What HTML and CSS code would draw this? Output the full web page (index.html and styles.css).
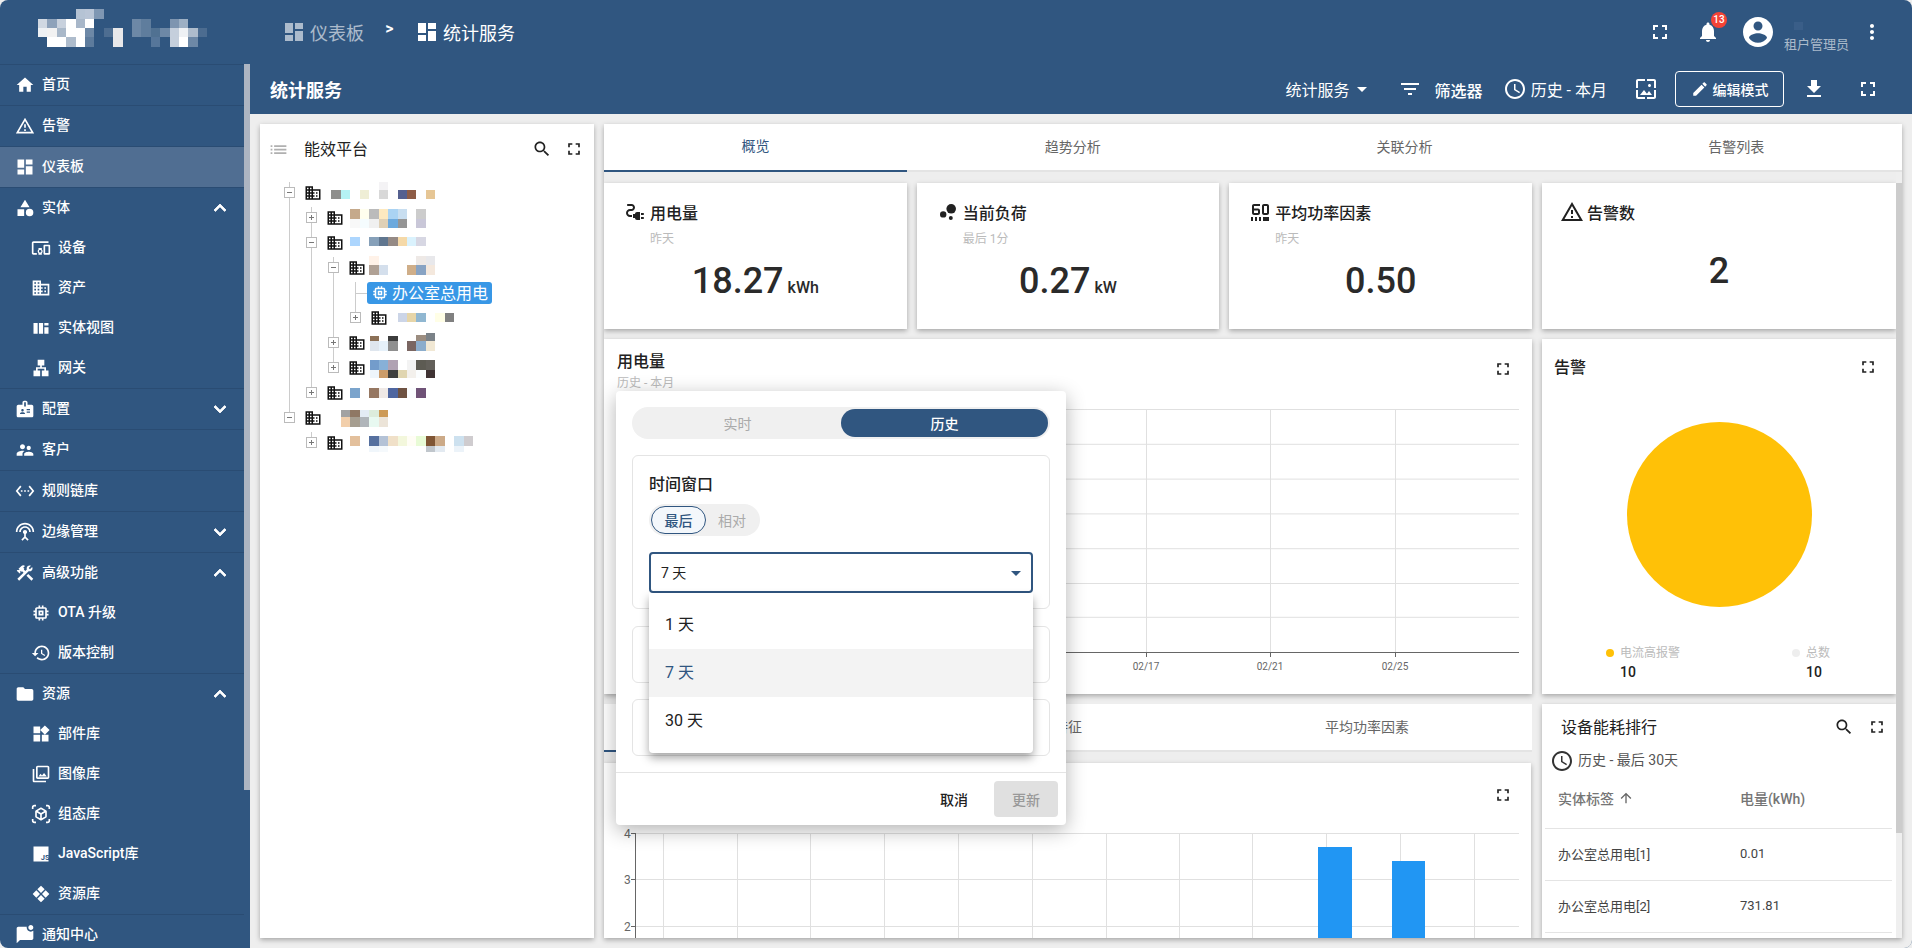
FILE: index.html
```html
<!DOCTYPE html>
<html lang="zh-CN">
<head>
<meta charset="utf-8">
<title>统计服务</title>
<link rel="stylesheet" href="styles.css">
</head>
<body>
<svg class="sprite" xmlns="http://www.w3.org/2000/svg">
<symbol id="i-home" viewBox="0 0 24 24"><path d="M10 20v-6h4v6h5v-8h3L12 3 2 12h3v8z"/></symbol>
<symbol id="i-warn" viewBox="0 0 24 24"><path d="M12 5.99L19.53 19H4.47L12 5.99M12 2L1 21h22L12 2zm1 14h-2v2h2v-2zm0-6h-2v4h2v-4z"/></symbol>
<symbol id="i-dash" viewBox="0 0 24 24"><path d="M3 13h8V3H3v10zm0 8h8v-6H3v6zm10 0h8V11h-8v10zm0-18v6h8V3h-8z"/></symbol>
<symbol id="i-cat" viewBox="0 0 24 24"><path d="M12 2l-5.5 9h11zM17.5 13a4.5 4.5 0 1 0 0 9 4.5 4.5 0 0 0 0-9zM3 13.5h8v8H3z"/></symbol>
<symbol id="i-dev" viewBox="0 0 24 24"><path d="M3 6h18V4H3c-1.1 0-2 .9-2 2v12c0 1.1.9 2 2 2h4v-2H3V6zm10 6H9v1.78c-.61.55-1 1.33-1 2.22s.39 1.67 1 2.22V20h4v-1.78c.61-.55 1-1.34 1-2.22s-.39-1.67-1-2.22V12zm-2 5.5c-.83 0-1.5-.67-1.5-1.5s.67-1.5 1.5-1.5 1.5.67 1.5 1.5-.67 1.5-1.5 1.5zM22 8h-6c-.5 0-1 .5-1 1v10c0 .5.5 1 1 1h6c.5 0 1-.5 1-1V9c0-.5-.5-1-1-1zm-1 10h-4v-8h4v8z"/></symbol>
<symbol id="i-domain" viewBox="0 0 24 24"><path d="M12 7V3H2v18h20V7H12zM6 19H4v-2h2v2zm0-4H4v-2h2v2zm0-4H4V9h2v2zm0-4H4V5h2v2zm4 12H8v-2h2v2zm0-4H8v-2h2v2zm0-4H8V9h2v2zm0-4H8V5h2v2zm10 12h-8v-2h2v-2h-2v-2h2v-2h-2V9h8v10zm-2-8h-2v2h2v-2zm0 4h-2v2h2v-2z"/></symbol>
<symbol id="i-quilt" viewBox="0 0 24 24"><path d="M3 6h5v13H3zM9.5 6h5v13h-5zM16 6h5v3h-5zM16 11h5v8h-5z"/></symbol>
<symbol id="i-lan" viewBox="0 0 24 24"><path d="M13 22h8v-7h-3v-4h-5V9h3V2H8v7h3v2H6v4H3v7h8v-7H8v-2h8v2h-3z"/></symbol>
<symbol id="i-badge" viewBox="0 0 24 24"><path d="M20 7h-5V4c0-1.1-.9-2-2-2h-2c-1.1 0-2 .9-2 2v3H4c-1.1 0-2 .9-2 2v11c0 1.1.9 2 2 2h16c1.1 0 2-.9 2-2V9c0-1.1-.9-2-2-2zM9 12c.83 0 1.5.67 1.5 1.5S9.83 15 9 15s-1.5-.67-1.5-1.5S8.17 12 9 12zm3 6H6v-.75c0-1 2-1.5 3-1.5s3 .5 3 1.5V18zm1-9h-2V4h2v5zm5 7.5h-4V15h4v1.5zm0-3h-4V12h4v1.5z"/></symbol>
<symbol id="i-sup" viewBox="0 0 24 24"><path d="M16.5 12c1.38 0 2.49-1.12 2.49-2.5S17.88 7 16.5 7C15.12 7 14 8.12 14 9.5s1.12 2.5 2.5 2.5zM9 11c1.66 0 2.99-1.34 2.99-3S10.66 5 9 5C7.34 5 6 6.34 6 8s1.34 3 3 3zm7.5 3c-1.83 0-5.5.92-5.5 2.75V19h11v-2.25c0-1.83-3.67-2.75-5.5-2.75zM9 13c-2.33 0-7 1.17-7 3.5V19h7v-2.25c0-.85.33-2.34 2.37-3.47C10.5 13.1 9.66 13 9 13z"/></symbol>
<symbol id="i-eth" viewBox="0 0 24 24"><path d="M7.77 6.76L6.23 5.48.82 12l5.41 6.52 1.54-1.28L3.42 12l4.35-5.24zM7 13h2v-2H7v2zm10-2h-2v2h2v-2zm-6 2h2v-2h-2v2zm6.77-7.52l-1.54 1.28L20.58 12l-4.35 5.24 1.54 1.28L23.18 12l-5.41-6.52z"/></symbol>
<symbol id="i-ant" viewBox="0 0 24 24"><path d="M12 5c-3.87 0-7 3.13-7 7h2c0-2.76 2.24-5 5-5s5 2.24 5 5h2c0-3.87-3.13-7-7-7zm1 9.29c.88-.39 1.5-1.26 1.5-2.29 0-1.38-1.12-2.5-2.5-2.5S9.5 10.62 9.5 12c0 1.02.62 1.9 1.5 2.29v3.3L7.59 21 9 22.41l3-3 3 3L16.41 21 13 17.59v-3.3zM12 1C5.93 1 1 5.93 1 12h2c0-4.97 4.03-9 9-9s9 4.03 9 9h2c0-6.07-4.93-11-11-11z"/></symbol>
<symbol id="i-tool" viewBox="0 0 24 24"><path d="M13.783 15.172l2.121-2.121 5.996 5.996-2.121 2.121zM17.5 10c1.93 0 3.5-1.57 3.5-3.5 0-.58-.16-1.12-.41-1.6l-2.7 2.7-1.49-1.49 2.7-2.7c-.48-.25-1.02-.41-1.6-.41C15.57 3 14 4.57 14 6.5c0 .41.08.8.21 1.16l-1.85 1.85-1.78-1.78.71-.71-1.41-1.41L12 3.49c-1.17-1.17-3.07-1.17-4.24 0L4.22 7.03l1.41 1.41H2.81l-.71.71 3.54 3.54.71-.71V9.15l1.41 1.41.71-.71 1.78 1.78-7.41 7.41 2.12 2.12L16.34 9.79c.36.13.75.21 1.16.21z"/></symbol>
<symbol id="i-chip" viewBox="0 0 24 24"><path d="M15 9H9v6h6V9zm-2 4h-2v-2h2v2zm8-2V9h-2V7c0-1.1-.9-2-2-2h-2V3h-2v2h-2V3H9v2H7c-1.1 0-2 .9-2 2v2H3v2h2v2H3v2h2v2c0 1.1.9 2 2 2h2v2h2v-2h2v2h2v-2h2c1.1 0 2-.9 2-2v-2h2v-2h-2v-2h2zm-4 6H7V7h10v10z"/></symbol>
<symbol id="i-hist" viewBox="0 0 24 24"><path d="M13 3c-4.97 0-9 4.03-9 9H1l3.89 3.89.07.14L9 12H6c0-3.87 3.13-7 7-7s7 3.13 7 7-3.13 7-7 7c-1.93 0-3.68-.79-4.94-2.06l-1.42 1.42C8.27 19.99 10.51 21 13 21c4.97 0 9-4.03 9-9s-4.03-9-9-9zm-1 5v5l4.28 2.54.72-1.21-3.5-2.08V8H12z"/></symbol>
<symbol id="i-folder" viewBox="0 0 24 24"><path d="M10 4H4c-1.1 0-1.99.9-1.99 2L2 18c0 1.1.9 2 2 2h16c1.1 0 2-.9 2-2V8c0-1.1-.9-2-2-2h-8l-2-2z"/></symbol>
<symbol id="i-widget" viewBox="0 0 24 24"><path d="M13 13v8h8v-8h-8zM3 21h8v-8H3v8zM3 3v8h8V3H3zm13.66-1.31L11 7.34 16.66 13l5.66-5.66-5.66-5.65z"/></symbol>
<symbol id="i-photo" viewBox="0 0 24 24"><path d="M20 4v12H8V4h12m0-2H8c-1.1 0-2 .9-2 2v12c0 1.1.9 2 2 2h12c1.1 0 2-.9 2-2V4c0-1.1-.9-2-2-2zm-8.5 9.67l1.69 2.26 2.48-3.1L19 15H9zM2 6v14c0 1.1.9 2 2 2h14v-2H4V6H2z"/></symbol>
<symbol id="i-ar" viewBox="0 0 24 24"><path d="M3 4c0-.55.45-1 1-1h2V1H4C2.34 1 1 2.34 1 4v2h2V4zm0 16v-2H1v2c0 1.66 1.34 3 3 3h2v-2H4c-.55 0-1-.45-1-1zM20 1h-2v2h2c.55 0 1 .45 1 1v2h2V4c0-1.66-1.34-3-3-3zm1 19c0 .55-.45 1-1 1h-2v2h2c1.66 0 3-1.34 3-3v-2h-2v2zm-2-5.13V9.13c0-.72-.38-1.38-1-1.73l-5-2.88c-.31-.18-.65-.27-1-.27s-.69.09-1 .27L6 7.39c-.62.36-1 1.02-1 1.74v5.74c0 .72.38 1.38 1 1.73l5 2.88c.31.18.65.27 1 .27s.69-.09 1-.27l5-2.88c.62-.35 1-1.01 1-1.73zm-8 2.3l-4-2.3v-4.63l4 2.33v4.6zm1-6.33L8.04 8.53 12 6.25l3.96 2.28L12 10.84zm5 4.03l-4 2.3v-4.6l4-2.33v4.63z"/></symbol>
<symbol id="i-diam" viewBox="0 0 24 24"><path d="M12 2l4.4 4.4L12 10.8 7.6 6.4zM6.4 7.6l4.4 4.4-4.4 4.4L2 12zM17.6 7.6L22 12l-4.4 4.4-4.4-4.4zM12 13.2l4.4 4.4L12 22l-4.4-4.4z"/></symbol>
<symbol id="i-note" viewBox="0 0 24 24"><path d="M22 6.98V16c0 1.1-.9 2-2 2H6l-4 4V4c0-1.1.9-2 2-2h10.1c-.06.32-.1.66-.1 1 0 2.76 2.24 5 5 5 1.13 0 2.16-.39 3-1.02zM16 3c0 1.66 1.34 3 3 3s3-1.34 3-3-1.34-3-3-3-3 1.34-3 3z"/></symbol>
<symbol id="i-up" viewBox="0 0 24 24"><path d="M12 8l-6 6 1.41 1.41L12 10.83l4.59 4.58L18 14z" stroke="currentColor" stroke-width=".8"/></symbol>
<symbol id="i-down" viewBox="0 0 24 24"><path d="M16.59 8.59L12 13.17 7.41 8.59 6 10l6 6 6-6z" stroke="currentColor" stroke-width=".8"/></symbol>
<symbol id="i-full" viewBox="0 0 24 24"><path d="M7 14H5v5h5v-2H7v-3zm-2-4h2V7h3V5H5v5zm12 7h-3v2h5v-5h-2v3zM14 5v2h3v3h2V5h-5z"/></symbol>
<symbol id="i-search" viewBox="0 0 24 24"><path d="M15.5 14h-.79l-.28-.27C15.41 12.59 16 11.11 16 9.5 16 5.91 13.09 3 9.5 3S3 5.91 3 9.5 5.91 16 9.5 16c1.61 0 3.09-.59 4.23-1.57l.27.28v.79l5 4.99L20.49 19l-4.99-5zm-6 0C7.01 14 5 11.99 5 9.5S7.01 5 9.5 5 14 7.01 14 9.5 11.99 14 9.5 14z"/></symbol>
<symbol id="i-bell" viewBox="0 0 24 24"><path d="M12 22c1.1 0 2-.9 2-2h-4c0 1.1.89 2 2 2zm6-6v-5c0-3.07-1.64-5.64-4.5-6.32V4c0-.83-.67-1.5-1.5-1.5s-1.5.67-1.5 1.5v.68C7.63 5.36 6 7.92 6 11v5l-2 2v1h16v-1l-2-2z"/></symbol>
<symbol id="i-acct" viewBox="0 0 24 24"><path d="M12 2C6.48 2 2 6.48 2 12s4.48 10 10 10 10-4.48 10-10S17.52 2 12 2zm0 3c1.66 0 3 1.34 3 3s-1.34 3-3 3-3-1.34-3-3 1.34-3 3-3zm0 14.2c-2.5 0-4.71-1.28-6-3.22.03-1.99 4-3.08 6-3.08 1.99 0 5.97 1.09 6 3.08-1.29 1.94-3.5 3.22-6 3.22z"/></symbol>
<symbol id="i-more" viewBox="0 0 24 24"><path d="M12 8c1.1 0 2-.9 2-2s-.9-2-2-2-2 .9-2 2 .9 2 2 2zm0 2c-1.1 0-2 .9-2 2s.9 2 2 2 2-.9 2-2-.9-2-2-2zm0 6c-1.1 0-2 .9-2 2s.9 2 2 2 2-.9 2-2-.9-2-2-2z"/></symbol>
<symbol id="i-filter" viewBox="0 0 24 24"><path d="M10 18h4v-2h-4v2zM3 6v2h18V6H3zm3 7h12v-2H6v2z"/></symbol>
<symbol id="i-clock" viewBox="0 0 24 24"><path d="M11.99 2C6.47 2 2 6.48 2 12s4.47 10 9.99 10C17.52 22 22 17.52 22 12S17.52 2 11.99 2zM12 20c-4.42 0-8-3.58-8-8s3.58-8 8-8 8 3.58 8 8-3.58 8-8 8zm.5-13H11v6l5.25 3.15.75-1.23-4.5-2.67z"/></symbol>
<symbol id="i-wall" viewBox="0 0 24 24"><path d="M4 4h7V2H4c-1.1 0-2 .9-2 2v7h2V4zm6 9l-4 5h12l-3-4-2.03 2.71L10 13zm7-4.5c0-.83-.67-1.5-1.5-1.5S14 7.67 14 8.5s.67 1.5 1.5 1.5S17 9.33 17 8.5zM20 2h-7v2h7v7h2V4c0-1.1-.9-2-2-2zm0 18h-7v2h7c1.1 0 2-.9 2-2v-7h-2v7zM4 13H2v7c0 1.1.9 2 2 2h7v-2H4v-7z"/></symbol>
<symbol id="i-edit" viewBox="0 0 24 24"><path d="M3 17.25V21h3.75L17.81 9.94l-3.75-3.75L3 17.25zM20.71 7.04c.39-.39.39-1.02 0-1.41l-2.34-2.34c-.39-.39-1.02-.39-1.41 0l-1.83 1.83 3.75 3.75 1.83-1.83z"/></symbol>
<symbol id="i-dl" viewBox="0 0 24 24"><path d="M19 9h-4V3H9v6H5l7 7 7-7zM5 18v2h14v-2H5z"/></symbol>
<symbol id="i-arrow" viewBox="0 0 24 24"><path d="M4 12l1.41 1.41L11 7.83V20h2V7.83l5.58 5.59L20 12l-8-8-8 8z"/></symbol>
<symbol id="i-caret" viewBox="0 0 24 24"><path d="M7 10l5 5 5-5z"/></symbol>
<symbol id="i-list" viewBox="0 0 24 24"><path d="M3 13h2v-2H3v2zm0 4h2v-2H3v2zm0-8h2V7H3v2zm4 4h14v-2H7v2zm0 4h14v-2H7v2zM7 7v2h14V7H7z"/></symbol>
<symbol id="i-plug" viewBox="0 0 24 24"><path d="M21 14c0-.55-.45-1-1-1h-2v2h2c.55 0 1-.45 1-1zM20 17h-2v2h2c.55 0 1-.45 1-1s-.45-1-1-1zM12 14h-2v4h2c0 1.1.9 2 2 2h3v-8h-3c-1.1 0-2 .9-2 2zM5 13c0-1.1.9-2 2-2h1.5c1.93 0 3.5-1.57 3.5-3.5S10.43 4 8.5 4H5c-.55 0-1 .45-1 1s.45 1 1 1h3.5C9.33 6 10 6.67 10 7.5S9.33 9 8.5 9H7c-2.21 0-4 1.79-4 4s1.79 4 4 4h2v-2H7c-1.1 0-2-.9-2-2z"/></symbol>
<symbol id="i-bubble" viewBox="0 0 24 24"><circle cx="7.2" cy="14.4" r="3.2"/><circle cx="14.8" cy="18" r="2"/><circle cx="15.2" cy="8.8" r="4.8"/></symbol>
<symbol id="i-fps" viewBox="0 0 24 24"><path d="M19 6v7h-3V6h3m0-2h-3c-1.1 0-2 .9-2 2v7c0 1.1.9 2 2 2h3c1.1 0 2-.9 2-2V6c0-1.1-.9-2-2-2zM12 6V4H6c-1.1 0-2 .9-2 2v7c0 1.1.9 2 2 2h4c1.1 0 2-.9 2-2v-2.5c0-1.1-.9-2-2-2H6V6h6zm-2 4.5V13H6v-2.5h4zM3 17h2v4H3zM7 17h2v4H7zM11 17h2v4h-2zM15 17h6v4h-6z"/></symbol>
</svg>

<div class="app">
  <header class="topbar">
    <svg class="logo" viewBox="0 0 20 4" shape-rendering="crispEdges">
      <rect x="4" y="0" width="1" height="1" fill="#b5c3d4"/><rect x="5" y="0" width="1" height="1" fill="#b9c5d6"/><rect x="6" y="0" width="1" height="1" fill="#7f97b3"/>
      <rect x="0" y="1" width="1" height="1" fill="#d0d8e2"/><rect x="1" y="1" width="1" height="1" fill="#8ea2ba"/><rect x="2" y="1" width="1" height="1" fill="#c8d1dd"/><rect x="3" y="1" width="1" height="1" fill="#fff"/><rect x="4" y="1" width="1" height="1" fill="#a8b7c9"/><rect x="5" y="1" width="1" height="1" fill="#fff"/><rect x="10" y="1" width="1" height="1" fill="#6d88a6"/><rect x="11" y="1" width="1" height="1" fill="#5f7d9d"/><rect x="14" y="1" width="1" height="1" fill="#7e95b0"/><rect x="15" y="1" width="1" height="1" fill="#9db0c4"/>
      <rect x="0" y="2" width="1" height="1" fill="#eef1f4"/><rect x="1" y="2" width="1" height="1" fill="#f2f2f2"/><rect x="2" y="2" width="1" height="1" fill="#a9b8c9"/><rect x="3" y="2" width="1" height="1" fill="#fff"/><rect x="4" y="2" width="1" height="1" fill="#fff"/><rect x="5" y="2" width="1" height="1" fill="#6d88a6"/><rect x="7" y="2" width="1" height="1" fill="#4d6d91"/><rect x="8" y="2" width="1" height="1" fill="#e8e8ea"/><rect x="10" y="2" width="1" height="1" fill="#6d88a6"/><rect x="11" y="2" width="1" height="1" fill="#5f7d9d"/><rect x="12" y="2" width="1" height="1" fill="#507192"/><rect x="13" y="2" width="1" height="1" fill="#6d88a6"/><rect x="14" y="2" width="1" height="1" fill="#c5cfdc"/><rect x="15" y="2" width="1" height="1" fill="#eef1f4"/><rect x="16" y="2" width="1" height="1" fill="#aebccc"/><rect x="17" y="2" width="1" height="1" fill="#4c6c90"/>
      <rect x="1" y="3" width="1" height="1" fill="#fff"/><rect x="2" y="3" width="1" height="1" fill="#fff"/><rect x="3" y="3" width="1" height="1" fill="#aebccc"/><rect x="4" y="3" width="1" height="1" fill="#fff"/><rect x="5" y="3" width="1" height="1" fill="#5d7b9c"/><rect x="8" y="3" width="1" height="1" fill="#e8e8ea"/><rect x="12" y="3" width="1" height="1" fill="#56769a"/><rect x="14" y="3" width="1" height="1" fill="#c5cfdc"/><rect x="15" y="3" width="1" height="1" fill="#fff"/><rect x="16" y="3" width="1" height="1" fill="#6d88a6"/>
    </svg>
    <nav class="crumbs">
      <a class="crumb crumb-dim"><svg class="ic"><use href="#i-dash"/></svg><span>仪表板</span></a>
      <span class="crumb-sep">&gt;</span>
      <a class="crumb"><svg class="ic"><use href="#i-dash"/></svg><span>统计服务</span></a>
    </nav>
    <div class="top-actions">
      <svg class="ic"><use href="#i-full"/></svg>
      <div class="bell"><svg class="ic"><use href="#i-bell"/></svg><span class="badge">13</span></div>
      <svg class="ic avatar"><use href="#i-acct"/></svg>
      <div class="user"><span class="user-name"></span><span class="user-role">租户管理员</span></div>
      <svg class="ic more"><use href="#i-more"/></svg>
    </div>
  </header>

  <div class="layout">
    <aside class="sidebar">
      <ul class="menu">
        <li class="item"><svg class="ic-s"><use href="#i-home"/></svg><span>首页</span></li>
        <li class="item"><svg class="ic-s"><use href="#i-warn"/></svg><span>告警</span></li>
        <li class="item item-active"><svg class="ic-s"><use href="#i-dash"/></svg><span>仪表板</span></li>
        <li class="item"><svg class="ic-s"><use href="#i-cat"/></svg><span>实体</span><svg class="ic chev"><use href="#i-up"/></svg></li>
        <li class="sub"><svg class="ic-s"><use href="#i-dev"/></svg><span>设备</span></li>
        <li class="sub"><svg class="ic-s"><use href="#i-domain"/></svg><span>资产</span></li>
        <li class="sub"><svg class="ic-s"><use href="#i-quilt"/></svg><span>实体视图</span></li>
        <li class="sub"><svg class="ic-s"><use href="#i-lan"/></svg><span>网关</span></li>
        <li class="item"><svg class="ic-s"><use href="#i-badge"/></svg><span>配置</span><svg class="ic chev"><use href="#i-down"/></svg></li>
        <li class="item"><svg class="ic-s"><use href="#i-sup"/></svg><span>客户</span></li>
        <li class="item"><svg class="ic-s"><use href="#i-eth"/></svg><span>规则链库</span></li>
        <li class="item"><svg class="ic-s"><use href="#i-ant"/></svg><span>边缘管理</span><svg class="ic chev"><use href="#i-down"/></svg></li>
        <li class="item"><svg class="ic-s"><use href="#i-tool"/></svg><span>高级功能</span><svg class="ic chev"><use href="#i-up"/></svg></li>
        <li class="sub"><svg class="ic-s"><use href="#i-chip"/></svg><span>OTA 升级</span></li>
        <li class="sub"><svg class="ic-s"><use href="#i-hist"/></svg><span>版本控制</span></li>
        <li class="item"><svg class="ic-s"><use href="#i-folder"/></svg><span>资源</span><svg class="ic chev"><use href="#i-up"/></svg></li>
        <li class="sub"><svg class="ic-s"><use href="#i-widget"/></svg><span>部件库</span></li>
        <li class="sub"><svg class="ic-s"><use href="#i-photo"/></svg><span>图像库</span></li>
        <li class="sub"><svg class="ic-s"><use href="#i-ar"/></svg><span>组态库</span></li>
        <li class="sub"><svg class="ic-s" viewBox="0 0 24 24"><path d="M3 3h18v18H3z"/><text class="js-text" x="17" y="19" text-anchor="middle">JS</text></svg><span>JavaScript库</span></li>
        <li class="sub"><svg class="ic-s"><use href="#i-diam"/></svg><span>资源库</span></li>
        <li class="item"><svg class="ic-s"><use href="#i-note"/></svg><span>通知中心</span></li>
      </ul>
      <div class="side-scroll"></div>
    </aside>

    <main class="main">
      <div class="toolbar">
        <h1 class="page-title">统计服务</h1>
        <div class="tb-actions">
          <div class="tb-state"><span>统计服务</span><svg class="ic"><use href="#i-caret"/></svg></div>
          <svg class="ic tb-filter"><use href="#i-filter"/></svg>
          <span class="tb-filter-text">筛选器</span>
          <svg class="ic tb-clock"><use href="#i-clock"/></svg>
          <span class="tb-time">历史 - 本月</span>
          <svg class="ic tb-img"><use href="#i-wall"/></svg>
          <button class="edit-btn"><svg class="ic-e"><use href="#i-edit"/></svg>编辑模式</button>
          <svg class="ic tb-dl"><use href="#i-dl"/></svg>
          <svg class="ic tb-full"><use href="#i-full"/></svg>
        </div>
      </div>

      <div class="board">
        <section class="tree-card">
          <div class="tree-head">
            <svg class="tree-list"><use href="#i-list"/></svg>
            <span class="tree-title">能效平台</span>
            <svg class="ic-m tree-search"><use href="#i-search"/></svg>
            <svg class="ic-m tree-full"><use href="#i-full"/></svg>
          </div>
          <div class="tree">
            <i class="guide g-a"></i><i class="guide g-b"></i><i class="guide g-c"></i><i class="guide g-d"></i><i class="guide g-e"></i><i class="guide-h"></i>
            <div class="node"><span class="box minus"></span><svg class="bld"><use href="#i-domain"/></svg>
              <svg class="mosaic" viewBox="195 180 480 75" shape-rendering="crispEdges"><rect x="357" y="186" width="27" height="24" fill="#f4f3f5"/><rect x="213" y="210" width="30" height="28" fill="#8f8f8d"/><rect x="243" y="210" width="27" height="28" fill="#b5f2f4"/><rect x="300" y="210" width="27" height="28" fill="#efeed6"/><rect x="357" y="210" width="27" height="28" fill="#d8d8d8"/><rect x="414" y="210" width="27" height="28" fill="#55608f"/><rect x="441" y="210" width="27" height="28" fill="#8e5c46"/><rect x="498" y="210" width="27" height="28" fill="#e6c695"/></svg></div>
            <div class="node lvl1"><span class="box plus"></span><svg class="bld"><use href="#i-domain"/></svg>
              <svg class="mosaic" viewBox="261 255 480 75" shape-rendering="crispEdges"><rect x="270" y="268" width="30" height="28" fill="#c5a98b"/><rect x="300" y="268" width="27" height="28" fill="#fffeee"/><rect x="327" y="268" width="30" height="28" fill="#bbb"/><rect x="357" y="268" width="27" height="28" fill="#fde9c0"/><rect x="384" y="268" width="30" height="28" fill="#aad3f3"/><rect x="414" y="268" width="27" height="28" fill="#c8def0"/><rect x="468" y="268" width="30" height="28" fill="#ccc"/><rect x="270" y="296" width="30" height="27" fill="#f8f8f8"/><rect x="300" y="296" width="27" height="27" fill="#f5fcfe"/><rect x="327" y="296" width="30" height="27" fill="#f0f0f0"/><rect x="357" y="296" width="27" height="27" fill="#dfd0b6"/><rect x="384" y="296" width="30" height="27" fill="#6ca9dd"/><rect x="414" y="296" width="27" height="27" fill="#959595"/><rect x="468" y="296" width="30" height="27" fill="#c9c7d8"/></svg></div>
            <div class="node lvl1"><span class="box minus"></span><svg class="bld"><use href="#i-domain"/></svg>
              <svg class="mosaic" viewBox="261 330 480 75" shape-rendering="crispEdges"><rect x="270" y="352" width="30" height="27" fill="#add6fe"/><rect x="327" y="352" width="30" height="27" fill="#86a0b9"/><rect x="357" y="352" width="27" height="27" fill="#60768f"/><rect x="384" y="352" width="30" height="27" fill="#958a85"/><rect x="414" y="352" width="27" height="27" fill="#f5d9a8"/><rect x="441" y="352" width="27" height="27" fill="#daf2fd"/><rect x="468" y="352" width="30" height="27" fill="#d7d7e3"/></svg></div>
            <div class="node lvl2"><span class="box minus"></span><svg class="bld"><use href="#i-domain"/></svg>
              <svg class="mosaic" viewBox="327 405 480 75" shape-rendering="crispEdges"><rect x="327" y="408" width="30" height="27" fill="#fff2e8"/><rect x="468" y="408" width="30" height="27" fill="#eee9e6"/><rect x="498" y="408" width="27" height="27" fill="#e8e8eb"/><rect x="327" y="435" width="30" height="30" fill="#b0a195"/><rect x="357" y="435" width="27" height="30" fill="#d4dfec"/><rect x="441" y="435" width="27" height="30" fill="#cfae89"/><rect x="468" y="435" width="30" height="30" fill="#88a3c3"/><rect x="498" y="435" width="27" height="30" fill="#f4e8dd"/></svg></div>
            <div class="node lvl3"><div class="selected"><svg class="ic-t"><use href="#i-chip"/></svg><span>办公室总用电</span></div></div>
            <div class="node lvl3"><span class="box plus"></span><svg class="bld"><use href="#i-domain"/></svg>
              <svg class="mosaic" viewBox="393 555 480 75" shape-rendering="crispEdges"><rect x="414" y="578" width="27" height="27" fill="#ccd5e7"/><rect x="441" y="578" width="27" height="27" fill="#e6d5a8"/><rect x="468" y="578" width="30" height="27" fill="#90b7d1"/><rect x="525" y="578" width="30" height="27" fill="#fffee6"/><rect x="555" y="578" width="27" height="27" fill="#808080"/></svg></div>
            <div class="node lvl2"><span class="box plus"></span><svg class="bld"><use href="#i-domain"/></svg>
              <svg class="mosaic" viewBox="327 630 480 75" shape-rendering="crispEdges"><rect x="330" y="648" width="27" height="15" fill="#8c7157"/><rect x="384" y="648" width="30" height="15" fill="#3c3c3c"/><rect x="468" y="644" width="30" height="19" fill="#9c8d80"/><rect x="498" y="640" width="27" height="23" fill="#7b8288"/><rect x="330" y="663" width="27" height="30" fill="#dfe6ee"/><rect x="357" y="663" width="27" height="30" fill="#e6f1fa"/><rect x="384" y="663" width="30" height="30" fill="#8f8f8f"/><rect x="441" y="663" width="27" height="30" fill="#7a6662"/><rect x="468" y="663" width="30" height="30" fill="#8cadcc"/><rect x="498" y="663" width="27" height="30" fill="#f1e8d4"/></svg></div>
            <div class="node lvl2"><span class="box plus"></span><svg class="bld"><use href="#i-domain"/></svg>
              <svg class="mosaic" viewBox="327 705 480 75" shape-rendering="crispEdges"><rect x="330" y="720" width="27" height="30" fill="#739ccb"/><rect x="357" y="720" width="27" height="30" fill="#87b0d7"/><rect x="384" y="720" width="30" height="30" fill="#b0a2b3"/><rect x="441" y="720" width="27" height="30" fill="#f3f3f3"/><rect x="468" y="720" width="30" height="30" fill="#5d5b53"/><rect x="498" y="720" width="27" height="30" fill="#63605a"/><rect x="330" y="750" width="27" height="25" fill="#eef5fb"/><rect x="357" y="750" width="27" height="25" fill="#cb9c6a"/><rect x="384" y="750" width="30" height="25" fill="#3f3f3d"/><rect x="414" y="750" width="27" height="25" fill="#e0d5b0"/><rect x="441" y="750" width="27" height="25" fill="#f3f0ec"/><rect x="468" y="750" width="30" height="25" fill="#fbfdfe"/><rect x="498" y="750" width="27" height="25" fill="#3f3334"/></svg></div>
            <div class="node lvl1"><span class="box plus"></span><svg class="bld"><use href="#i-domain"/></svg>
              <svg class="mosaic" viewBox="261 780 480 75" shape-rendering="crispEdges"><rect x="270" y="805" width="30" height="28" fill="#7ba4cc"/><rect x="327" y="805" width="30" height="28" fill="#967762"/><rect x="357" y="805" width="27" height="28" fill="#efe9e6"/><rect x="384" y="805" width="30" height="28" fill="#4f66a0"/><rect x="414" y="805" width="27" height="28" fill="#6e5242"/><rect x="441" y="805" width="27" height="28" fill="#fafcfe"/><rect x="468" y="805" width="30" height="28" fill="#6f5277"/></svg></div>
            <div class="node"><span class="box minus"></span><svg class="bld"><use href="#i-domain"/></svg>
              <svg class="mosaic" viewBox="195 855 480 75" shape-rendering="crispEdges"><rect x="243" y="870" width="27" height="22" fill="#a2a2a2"/><rect x="270" y="870" width="30" height="22" fill="#8f7864"/><rect x="300" y="870" width="27" height="22" fill="#e3ebf4"/><rect x="327" y="870" width="30" height="22" fill="#dcecdc"/><rect x="357" y="870" width="27" height="22" fill="#cd9a56"/><rect x="243" y="892" width="27" height="28" fill="#f2cfab"/><rect x="270" y="892" width="30" height="28" fill="#a69e90"/><rect x="300" y="892" width="27" height="28" fill="#b0b5ba"/><rect x="327" y="892" width="30" height="28" fill="#e8f9f1"/><rect x="357" y="892" width="27" height="28" fill="#ece4d8"/></svg></div>
            <div class="node lvl1"><span class="box plus"></span><svg class="bld"><use href="#i-domain"/></svg>
              <svg class="mosaic" viewBox="261 930 480 75" shape-rendering="crispEdges"><rect x="270" y="948" width="30" height="29" fill="#e3c09c"/><rect x="327" y="948" width="30" height="29" fill="#56709f"/><rect x="357" y="948" width="27" height="29" fill="#b4c2d6"/><rect x="384" y="948" width="30" height="29" fill="#f0e0c8"/><rect x="414" y="948" width="27" height="29" fill="#f3f7dc"/><rect x="441" y="948" width="27" height="29" fill="#fffdf5"/><rect x="468" y="948" width="30" height="29" fill="#e8fbd6"/><rect x="498" y="948" width="27" height="29" fill="#7f5534"/><rect x="525" y="948" width="30" height="29" fill="#ccaa88"/><rect x="582" y="948" width="30" height="29" fill="#cde1ef"/><rect x="612" y="948" width="27" height="29" fill="#cfcccf"/><rect x="327" y="977" width="30" height="18" fill="#f0f6fb"/><rect x="357" y="977" width="27" height="18" fill="#f5f9fc"/><rect x="498" y="977" width="27" height="18" fill="#c0c6cc"/><rect x="525" y="977" width="30" height="18" fill="#e3eaf1"/><rect x="582" y="977" width="30" height="18" fill="#ecf3f9"/></svg></div>
          </div>
        </section>

        <section class="stats">
          <div class="tabs tabs-top">
            <div class="tab tab-active">概览</div>
            <div class="tab">趋势分析</div>
            <div class="tab">关联分析</div>
            <div class="tab">告警列表</div>
          </div>
          <div class="stats-body">
            <div class="grid">
              <div class="left-col">
                <div class="kpis">
                  <article class="kpi">
                    <div class="kpi-head"><svg class="ic-k"><use href="#i-plug"/></svg><span>用电量</span></div>
                    <div class="kpi-sub">昨天</div>
                    <div class="kpi-val">18.27<small>kWh</small></div>
                  </article>
                  <article class="kpi">
                    <div class="kpi-head"><svg class="ic-k"><use href="#i-bubble"/></svg><span>当前负荷</span></div>
                    <div class="kpi-sub">最后 1分</div>
                    <div class="kpi-val">0.27<small>kW</small></div>
                  </article>
                  <article class="kpi">
                    <div class="kpi-head"><svg class="ic-k"><use href="#i-fps"/></svg><span>平均功率因素</span></div>
                    <div class="kpi-sub">昨天</div>
                    <div class="kpi-val">0.50</div>
                  </article>
                </div>
                <article class="chart-card">
                  <div class="chart-head">
                    <div><div class="chart-title">用电量</div><div class="chart-sub">历史 - 本月</div></div>
                    <svg class="ic-m chart-full"><use href="#i-full"/></svg>
                  </div>
                  <svg class="plot" viewBox="0 0 928 285" width="928" height="285">
                    <path class="grid-line" d="M31 .5H915M31 35.3H915M31 70.1H915M31 104.9H915M31 139.7H915M31 174.5H915M31 208.3H915M417.5 0V243M542.5 0V243M666.5 0V243M791.5 0V243"/>
                    <path class="axis-line" d="M31 243.5H915M417.5 243V248M542.5 243V248M666.5 243V248M791.5 243V248"/>
                    <text class="tick" x="542" y="261" text-anchor="middle">02/17</text>
                    <text class="tick" x="666" y="261" text-anchor="middle">02/21</text>
                    <text class="tick" x="791" y="261" text-anchor="middle">02/25</text>
                  </svg>
                </article>
                <div class="sub-panel">
                  <div class="tabs tabs-low">
                    <div class="tab tab-active">功率分析</div>
                    <div class="tab">负荷特征</div>
                    <div class="tab">平均功率因素</div>
                  </div>
                  <article class="bar-card">
                    <div class="bar-head"><svg class="ic-m"><use href="#i-full"/></svg></div>
                    <svg class="plot" viewBox="0 0 928 105" width="928" height="105">
                      <path class="grid-line" d="M31 .5H915M31 46.5H915M31 93.5H915M59.5 0V105M133.5 0V105M206.5 0V105M280.5 0V105M354.5 0V105M428.5 0V105M502.5 0V105M575.5 0V105M648.5 0V105M722.5 0V105M796.5 0V105M870.5 0V105"/>
                      <path class="axis-line" d="M31.5 0V105M27 .5H31M27 46.5H31M27 93.5H31"/>
                      <text class="tick tick-y" x="20" y="5">4</text>
                      <text class="tick tick-y" x="20" y="51">3</text>
                      <text class="tick tick-y" x="20" y="98">2</text>
                      <rect class="bar" x="714" y="14" width="34" height="91"/>
                      <rect class="bar" x="788" y="28" width="33" height="77"/>
                    </svg>
                  </article>
                </div>
              </div>
              <div class="right-col">
                <article class="kpi kpi-alarm">
                  <div class="kpi-head"><svg class="ic-k ic-warn"><use href="#i-warn"/></svg><span>告警数</span></div>
                  <div class="alarm-val">2</div>
                </article>
                <article class="pie-card">
                  <div class="pie-head"><span>告警</span><svg class="ic-m"><use href="#i-full"/></svg></div>
                  <div class="pie"></div>
                  <div class="legend">
                    <div class="legend-item"><i class="dot dot-y"></i><span class="legend-label">电流高报警</span><b class="legend-val">10</b></div>
                    <div class="legend-item legend-total"><i class="dot dot-g"></i><span class="legend-label">总数</span><b class="legend-val">10</b></div>
                  </div>
                </article>
                <article class="rank-card">
                  <div class="rank-head"><span class="rank-title">设备能耗排行</span><svg class="ic-m"><use href="#i-search"/></svg><svg class="ic-m"><use href="#i-full"/></svg></div>
                  <div class="rank-time"><svg class="ic"><use href="#i-clock"/></svg><span>历史 - 最后 30天</span></div>
                  <div class="rank-row rank-th"><span class="th-sort">实体标签<svg class="ic-a"><use href="#i-arrow"/></svg></span><span>电量(kWh)</span></div>
                  <div class="rank-row"><span>办公室总用电[1]</span><span>0.01</span></div>
                  <div class="rank-row"><span>办公室总用电[2]</span><span>731.81</span></div>
                </article>
              </div>
            </div>
            <div class="inner-scroll"><div class="inner-thumb"></div></div>
          </div>
        </section>
      </div>
    </main>
  </div>

  <div class="popup">
    <div class="seg seg-wide"><span class="seg-off">实时</span><span class="seg-on">历史</span></div>
    <div class="panel panel-time">
      <div class="panel-title">时间窗口</div>
      <div class="seg-small"><span class="small-on">最后</span><span class="small-off">相对</span></div>
      <div class="select"><span>7 天</span><svg class="ic sel-caret"><use href="#i-caret"/></svg></div>
    </div>
    <div class="panel panel-low panel-low-first"></div>
    <div class="panel panel-low"></div>
    <div class="popup-foot"><button class="btn-cancel">取消</button><button class="btn-update">更新</button></div>
    <ul class="dropdown">
      <li><span>1 天</span></li>
      <li class="opt-on"><span>7 天</span></li>
      <li><span>30 天</span></li>
    </ul>
  </div>
</div>
</body>
</html>
```
FILE: styles.css
```css
* { box-sizing: border-box; }
html, body { margin: 0; padding: 0; }
body {
  width: 1912px; height: 948px; overflow: hidden; background: #eee;
  font-family: Roboto, "Noto Sans CJK SC", sans-serif; font-size: 14px; color: #212121;
}
ul { list-style: none; margin: 0; padding: 0; }
h1 { margin: 0; }
button { font-family: inherit; }
.sprite { display: none; }
.ic { width: 24px; height: 24px; flex: none; fill: currentColor; }
.ic-m { width: 20px; height: 20px; flex: none; fill: #212121; }
.ic-s { width: 20px; height: 20px; flex: none; fill: #fff; }
.ic-e { width: 18px; height: 18px; flex: none; fill: #fff; }
.ic-t { width: 18px; height: 18px; flex: none; fill: #fff; }
.ic-a { width: 16px; height: 16px; flex: none; fill: #666; margin-left: 4px; }
.ic-k { width: 24px; height: 24px; flex: none; fill: #212121; }

.app {
  position: relative; width: 1912px; height: 948px; background: #305680;
  border-radius: 8px; overflow: hidden; display: flex; flex-direction: column; color: #fff;
}

/* top bar */
.topbar { height: 64px; flex: none; display: flex; align-items: center; }
.logo { width: 188px; height: 38px; margin: 9px 0 0 38px; flex: none; align-self: flex-start; }
.crumbs { display: flex; align-items: center; margin-left: 56px; font-size: 18px; }
.crumb { display: flex; align-items: center; gap: 4px; }
.crumb-dim { opacity: .6; }
.crumb-sep { width: 51px; text-align: center; font-size: 16px; font-weight: 700; margin-top: -8px; }
.top-actions { margin-left: auto; padding-right: 28px; display: flex; align-items: center; }
.bell { position: relative; width: 24px; height: 24px; margin-left: 24px; }
.badge {
  position: absolute; left: 15px; top: -8px; min-width: 16px; height: 16px; border-radius: 8px;
  background: #f44336; color: #fff; font-size: 10px; font-weight: 500; line-height: 16px; text-align: center;
}
.avatar { width: 36px; height: 36px; margin-left: 20px; }
.user { width: 64px; margin-left: 8px; height: 36px; display: flex; flex-direction: column; justify-content: flex-end; margin-top: 8px; }
.user-role { font-size: 13px; color: rgba(255,255,255,.6); white-space: nowrap; line-height: 18px; }
.user-name { display: block; width: 9px; height: 8px; background: #3a5e88; margin: 0 0 6px 10px; }
.more { margin-left: 12px; }

/* layout */
.layout { flex: 1; display: flex; min-height: 0; }
.sidebar { width: 250px; flex: none; display: flex; overflow: hidden; }
.menu { width: 244px; flex: none; }
.item, .sub { display: flex; align-items: center; font-weight: 500; font-size: 14px; gap: 7px; }
.item span, .sub span { margin-bottom: 4px; }
.item { height: 41px; padding-left: 15px; border-top: 1px solid #2a4c73; }
.sub { height: 40px; padding-left: 31px; }
.item-active { background: #506e92; }
.chev { margin-left: auto; margin-right: 12px; }
.js-text { fill: #305680; font-size: 9px; font-weight: 700; font-family: Roboto, sans-serif; }
.side-scroll { width: 6px; height: 726px; background: #adb5c2; }

.main { flex: 1; min-width: 0; display: flex; flex-direction: column; }
.toolbar { height: 50px; flex: none; display: flex; align-items: center; padding: 0 32px 0 20px; }
.page-title { font-size: 18px; font-weight: 700; }
.tb-actions { margin-left: auto; display: flex; align-items: center; font-size: 16px; }
.tb-state { display: flex; align-items: center; }
.tb-filter { margin-left: 24px; }
.tb-filter-text { margin-left: 13px; font-weight: 500; margin-top: 2px; }
.tb-clock { margin-left: 20px; }
.tb-time { margin-left: 4px; }
.tb-img { margin-left: 27px; }
.edit-btn {
  margin-left: 17px; width: 109px; height: 36px; background: transparent; color: #fff;
  border: 1px solid #fff; border-radius: 4px; font-size: 14px; font-weight: 500;
  display: flex; align-items: center; justify-content: center; gap: 4px; padding: 0;
}
.tb-dl { margin-left: 18px; }
.tb-full { margin-left: 30px; }

/* board */
.board { flex: 1; min-height: 0; background: #eee; padding: 10px; display: flex; gap: 10px; color: #212121; }
.tree-card { width: 334px; flex: none; background: #fff; box-shadow: 0 2px 5px rgba(0,0,0,.3); }
.tree-head { height: 50px; display: flex; align-items: center; padding-left: 8px; color: #212121; }
.tree-list { width: 21px; height: 21px; flex: none; fill: #b0b0b0; }
.tree-title { font-size: 16px; margin: 0 0 2px 15px; }
.tree-search { margin-left: auto; }
.tree-full { margin: 0 10px 0 12px; }
.tree { position: relative; margin-top: 6px; padding-left: 24px; }
.guide { position: absolute; width: 1px; background: #ccc; }
.g-a { left: 29px; top: 2px; height: 230px; }
.g-b { left: 51px; top: 27px; height: 180px; }
.g-c { left: 73px; top: 77px; height: 105px; }
.g-d { left: 95px; top: 102px; height: 30px; }
.g-e { left: 51px; top: 252px; height: 5px; }
.guide-h { position: absolute; left: 95px; top: 113px; width: 12px; height: 1px; background: #ccc; }
.node { height: 25px; display: flex; align-items: center; position: relative; }
.lvl1 { padding-left: 22px; }
.lvl2 { padding-left: 44px; }
.lvl3 { padding-left: 66px; }
.box { position: relative; width: 11px; height: 11px; flex: none; background: #fff; border: 1px solid #bbb; }
.box::before { content: ""; position: absolute; left: 2px; top: 4px; width: 5px; height: 1px; background: #777; }
.plus::after { content: ""; position: absolute; left: 4px; top: 2px; width: 1px; height: 5px; background: #777; }
.bld { width: 18px; height: 18px; flex: none; margin-left: 8.5px; margin-right: 3.5px; fill: #111; }
.mosaic { width: 160px; height: 25px; flex: none; overflow: visible; }
.selected {
  margin-left: 17px; height: 22px; width: 125px; background: #3897e6; border-radius: 3px; color: #fff;
  font-size: 16px; display: flex; align-items: center; gap: 4px; padding-left: 4px; white-space: nowrap; position: relative;
}
.selected span { margin: 0 0 2px -1px; }

.stats { flex: 1; min-width: 0; background: #fff; box-shadow: 0 2px 5px rgba(0,0,0,.3); display: flex; flex-direction: column; }
.tabs { display: grid; height: 48px; flex: none; border-bottom: 2px solid #e4e4e4; background: #fff; }
.tabs-top { grid-template-columns: 303px 1fr 1fr 1fr; }
.tabs-low { grid-template-columns: 302px 296px 330px; }
.tab { display: flex; align-items: center; justify-content: center; height: 48px; padding-bottom: 4px; color: #666; font-size: 14px; }
.tab-active { color: #305680; border-bottom: 2px solid #305680; }
.stats-body { flex: 1; min-height: 0; display: flex; background: #eee; }
.grid { width: 1292px; flex: none; padding-top: 11px; display: flex; gap: 10px; overflow: hidden; }
.left-col { width: 928px; flex: none; display: flex; flex-direction: column; gap: 10px; }
.right-col { width: 354px; flex: none; display: flex; flex-direction: column; gap: 10px; }
.inner-scroll { width: 6px; flex: none; background: #efefef; padding-top: 11px; }
.inner-thumb { height: 650px; background: #ccc; }

.kpis { display: grid; grid-template-columns: repeat(3, 1fr); gap: 10px; }
.kpi { height: 146px; background: #fff; box-shadow: 0 2px 5px rgba(0,0,0,.3); padding: 17px 0 0 19px; }
.kpi-head { display: flex; align-items: center; height: 24px; gap: 3px; font-size: 16px; font-weight: 500; }
.kpi-sub { font-size: 12px; color: #bbb; margin: 6px 0 0 27px; line-height: 18px; }
.kpi-val { margin: 11px 0 0 -19px; text-align: center; font-size: 36px; font-weight: 500; line-height: 44px; color: #2a2a2a; }
.kpi-val small { font-size: 16px; margin-left: 4px; }
.kpi-alarm { padding-left: 18px; }
.alarm-val { margin: 25px 0 0 -18px; text-align: center; font-size: 36px; font-weight: 500; line-height: 44px; color: #2a2a2a; }

.chart-card { height: 355px; background: #fff; box-shadow: 0 2px 5px rgba(0,0,0,.3); overflow: hidden; }
.chart-head { height: 70px; padding: 13px 19px 0 13px; display: flex; justify-content: space-between; align-items: flex-start; }
.chart-title { font-size: 16px; font-weight: 500; line-height: 20px; }
.chart-sub { font-size: 12px; color: #bbb; line-height: 18px; margin-top: 2px; }
.chart-full { margin-top: 7px; }
.plot { display: block; overflow: visible; }
.grid-line { fill: none; stroke: #e0e0e0; stroke-width: 1; }
.axis-line { fill: none; stroke: #666; stroke-width: 1; }
.tick { font-size: 10px; fill: #666; font-family: Roboto, sans-serif; }
.tick-y { font-size: 12px; }
.bar { fill: #2196f3; }

.sub-panel { flex: 1; display: flex; flex-direction: column; min-height: 0; background: #eee; }
.tabs-low { margin-bottom: 11px; }
.bar-card { flex: 1; background: #fff; overflow: hidden; box-shadow: 0 2px 5px rgba(0,0,0,.3); margin-right: 1px; }
.bar-head { height: 70px; display: flex; justify-content: flex-end; align-items: flex-start; padding: 22px 18px 0 0; }

.pie-card { height: 355px; background: #fff; box-shadow: 0 2px 5px rgba(0,0,0,.3); }
.pie-head { height: 55px; display: flex; justify-content: space-between; align-items: center; padding: 0 18px 0 12px; font-size: 16px; font-weight: 500; }
.pie-head span { margin-bottom: 2px; }
.pie { width: 185px; height: 185px; border-radius: 50%; background: #ffc107; margin: 28px auto 0; }
.legend { display: flex; margin: 37px 0 0 64px; }
.legend-item { display: grid; grid-template-columns: 14px auto; align-items: center; row-gap: 1px; }
.legend-total { margin-left: 112px; }
.dot { width: 8px; height: 8px; border-radius: 50%; display: block; }
.dot-y { background: #ffc107; }
.dot-g { background: #eee; }
.legend-label { font-size: 12px; color: #bbb; line-height: 18px; }
.legend-val { grid-column: 2; font-size: 14px; font-weight: 500; line-height: 18px; }

.rank-card { flex: 1; min-height: 0; background: #fff; overflow: hidden; box-shadow: 0 2px 5px rgba(0,0,0,.3); }
.rank-head { height: 46px; display: flex; align-items: center; padding: 0 9px 0 19px; gap: 13px; }
.rank-title { font-size: 16px; font-weight: 400; margin: 0 auto 2px 0; }
.rank-time { height: 21px; display: flex; align-items: center; padding-left: 8px; gap: 4px; font-size: 14px; color: #555; }
.rank-time span { margin-bottom: 4px; }
.rank-time .ic { color: #333; }
.rank-row {
  margin: 0 4px 0 3px; padding-left: 13px; height: 52px; display: grid; grid-template-columns: 182px 1fr;
  align-items: center; border-bottom: 1.5px solid #e4e4e4; font-size: 13px; color: #444;
}
.rank-row span { margin-bottom: 3px; }
.rank-th { height: 58px; font-size: 14px; font-weight: 500; color: #757575; }
.th-sort { display: flex; align-items: center; }

/* popup */
.popup {
  position: absolute; left: 616px; top: 391px; width: 450px; height: 434px; background: #fff; color: #212121;
  border-radius: 4px; box-shadow: 0 5px 20px rgba(0,0,0,.3); padding: 16px 16px 0;
}
.seg-wide { height: 32px; border-radius: 16px; background: #f0f0f0; display: flex; align-items: center; padding: 0 2px; width: 418px; }
.seg-wide span { display: flex; align-items: center; justify-content: center; height: 28px; width: 207px; border-radius: 14px; font-size: 14px; }
.seg-off { color: #aaa; flex: 1; }
.seg-on { background: #305680; color: #fff; font-weight: 500; }
.panel { border: 1px solid #e4e4e4; border-radius: 6px; width: 418px; }
.panel-time { height: 154px; margin-top: 16px; padding: 19px 16px 0; }
.panel-low { height: 57px; margin-top: 16px; }
.panel-low-first { margin-top: 17px; }
.panel-title { font-size: 16px; font-weight: 500; line-height: 20px; }
.seg-small { margin-top: 9px; width: 111px; height: 32px; border-radius: 16px; background: #f0f0f0; display: flex; align-items: center; padding: 0 2px; font-size: 14px; }
.small-on { width: 55px; height: 28px; border: 1.5px solid #305680; border-radius: 14px; background: #f3f7fb; color: #305680; font-weight: 500; display: flex; align-items: center; justify-content: center; }
.small-off { flex: 1; text-align: center; color: #aaa; }
.select {
  margin-top: 16px; width: 384px; height: 41px; border: 2px solid #305680; border-radius: 4px;
  display: flex; align-items: center; justify-content: space-between; padding-left: 10px; font-size: 14px; padding-right: 3px;
}
.select span { margin-bottom: 2px; }
.sel-caret { color: #305680; }
.popup-foot {
  margin: 16px -16px 0; height: 53px; border-top: 1px solid #e4e4e4; display: flex; justify-content: flex-end;
  align-items: center; padding-right: 8px; gap: 8px;
}
.btn-cancel { border: 0; background: transparent; font-size: 14px; font-weight: 500; width: 64px; height: 36px; color: #212121; padding: 0; }
.btn-update { border: 0; background: #e0e0e0; color: #999; border-radius: 4px; font-size: 14px; font-weight: 500; width: 64px; height: 36px; padding: 0; }
.dropdown {
  position: absolute; left: 33px; top: 202px; width: 384px; height: 160px; padding: 8px 0; background: #fff;
  border-radius: 0 0 4px 4px; box-shadow: 0 5px 10px rgba(0,0,0,.35);
}
.dropdown li { height: 48px; display: flex; align-items: center; padding-left: 16px; font-size: 16px; }
.dropdown li span { margin-bottom: 4px; }
.opt-on { background: #f3f3f3; color: #305680; }
```
